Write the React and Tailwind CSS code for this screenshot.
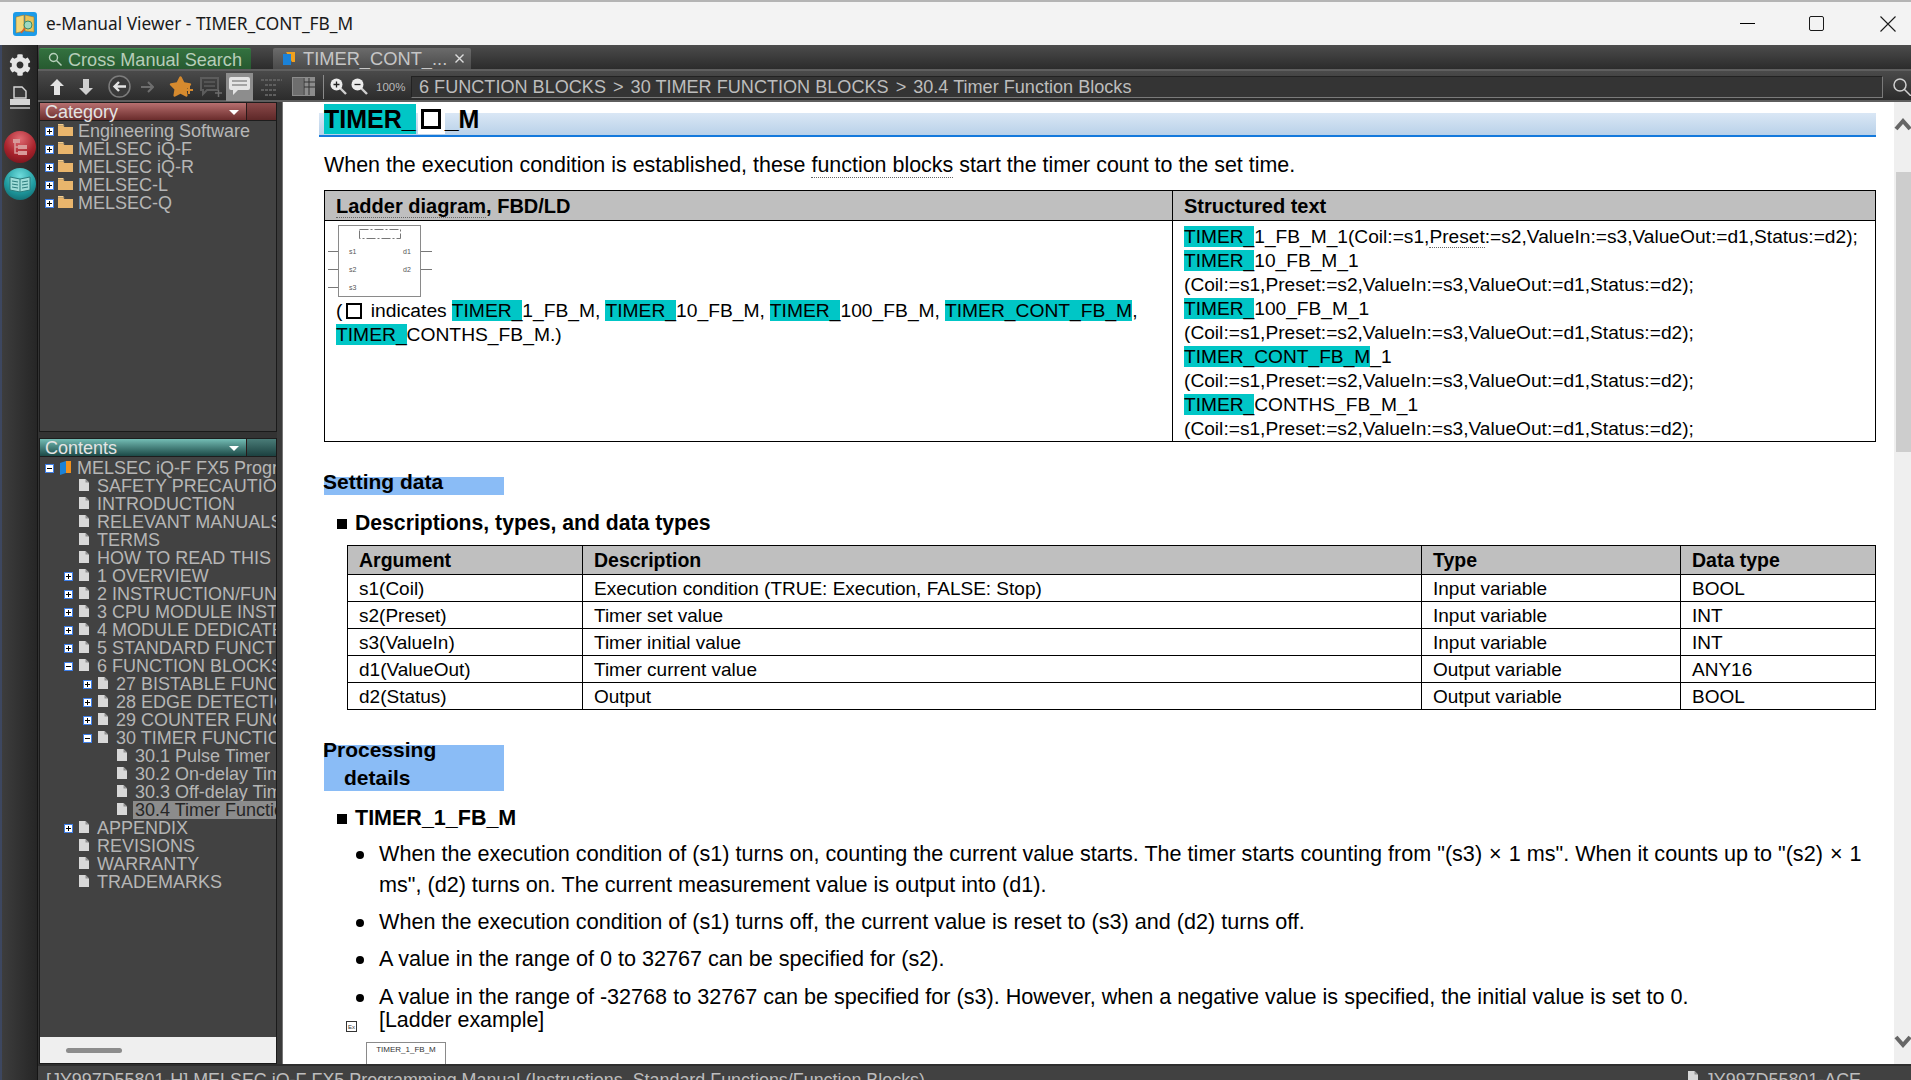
import React from "react";
import { FaCog, FaStar } from "react-icons/fa";

const Hi = ({ children }) => <span className="bg-[#00c6c6]">{children}</span>;
const Dot = ({ children }) => <span className="border-b border-dotted border-[#666]">{children}</span>;
const Times = () => <span className="mx-px">×</span>;
const Sep = () => <span className="mx-[7px]">{">"}</span>;

const Toggle = ({ open }) => (
  <span className="relative block h-[9px] w-[9px] shrink-0 border border-[#3f7fe8] bg-white">
    <span className="absolute left-[1px] top-[3px] h-px w-[5px] bg-black" />
    {!open && <span className="absolute left-[3px] top-[1px] h-[5px] w-px bg-black" />}
  </span>
);
const Page = () => (
  <svg width="10" height="12" viewBox="0 0 10 12" className="block shrink-0"><path d="M0 0h6.5L10 3.5V12H0z" fill="#d8d8d8" /><path d="M6.5 0v3.5H10" fill="#8f8f8f" /></svg>
);
const Folder = () => (
  <svg width="15" height="12" viewBox="0 0 15 12" className="block shrink-0"><path d="M0 1.5h5l1.5 1.5H15v9H0z" fill="#e9b56c" /><path d="M0 0h5l1.5 1.5H0z" fill="#f4cd8e" /></svg>
);
const Manual = () => (
  <svg width="14" height="14" viewBox="0 0 14 14" className="block shrink-0"><path d="M2 2 8 0v12l-6 2z" fill="#1b82d8" /><path d="M8 0h5v12H8z" fill="#f0911e" /></svg>
);

const Row = ({ level, toggle, icon, selected, children }) => {
  const pad = { 0: "pl-[5px]", 1: "pl-[24px]", 2: "pl-[43px]", 3: "pl-[62px]" }[level];
  return (
    <div className={`flex h-[18px] items-center whitespace-nowrap ${pad}`}>
      <span className="block w-[9px] shrink-0">{toggle && <Toggle open={toggle === "open"} />}</span>
      {icon === "folder" && <span className="ml-[4px] mb-[2px]"><Folder /></span>}
      {icon === "manual" && <span className="ml-[4px]"><Manual /></span>}
      {icon === "page" && <span className="ml-[6px] mb-[3px]"><Page /></span>}
      {icon === "page" ? (
        selected
          ? <span className="ml-[6px] h-[18px] flex-1 overflow-hidden bg-[#8c8c8c] pl-[2px] text-[#262626]">{children}</span>
          : <span className="ml-[8px]">{children}</span>
      ) : (
        <span className="ml-[5px]">{children}</span>
      )}
    </div>
  );
};

const cat = ["Engineering Software", "MELSEC iQ-F", "MELSEC iQ-R", "MELSEC-L", "MELSEC-Q"];
const tree = [
  [1, null, "SAFETY PRECAUTIONS"], [1, null, "INTRODUCTION"], [1, null, "RELEVANT MANUALS"], [1, null, "TERMS"],
  [1, null, "HOW TO READ THIS MANUAL"], [1, "closed", "1 OVERVIEW"], [1, "closed", "2 INSTRUCTION/FUNCTION BLOCK LIST"],
  [1, "closed", "3 CPU MODULE INSTRUCTIONS"], [1, "closed", "4 MODULE DEDICATED INSTRUCTIONS"], [1, "closed", "5 STANDARD FUNCTIONS"],
  [1, "open", "6 FUNCTION BLOCKS"], [2, "closed", "27 BISTABLE FUNCTION BLOCKS"], [2, "closed", "28 EDGE DETECTION FUNCTION BLOCKS"],
  [2, "closed", "29 COUNTER FUNCTION BLOCKS"], [2, "open", "30 TIMER FUNCTION BLOCKS"], [3, null, "30.1 Pulse Timer"],
  [3, null, "30.2 On-delay Timer"], [3, null, "30.3 Off-delay Timer"], [3, null, "30.4 Timer Function Blocks", true],
  [1, "closed", "APPENDIX"], [1, null, "REVISIONS"], [1, null, "WARRANTY"], [1, null, "TRADEMARKS"],
];

const PanelHeader = ({ label, cls, right }) => (
  <div className={`flex h-[19px] shrink-0 items-stretch border-t border-b border-[#1d1d1d] ${cls}`}>
    <div className="relative flex flex-1 items-center pl-[5px] text-[18px] leading-[18px] text-[#e4e4e4]">
      {label}
      <span className="absolute right-[7px] top-[7px] h-0 w-0 border-x-[5px] border-t-[5px] border-x-transparent border-t-white" />
    </div>
    <div className={`w-[30px] border-l border-[#2a1a1a] ${right}`} />
  </div>
);

const Args = [
  ["s1(Coil)", "Execution condition (TRUE: Execution, FALSE: Stop)", "Input variable", "BOOL"],
  ["s2(Preset)", "Timer set value", "Input variable", "INT"],
  ["s3(ValueIn)", "Timer initial value", "Input variable", "INT"],
  ["d1(ValueOut)", "Timer current value", "Output variable", "ANY16"],
  ["d2(Status)", "Output", "Output variable", "BOOL"],
];

const Bullet = ({ children, cls }) => (
  <li className={`relative pl-[55px] ${cls}`}>
    <span className="absolute left-[32px] top-[13px] h-[8px] w-[8px] rounded-full bg-black" />
    {children}
  </li>
);
const Params = "(Coil:=s1,Preset:=s2,ValueIn:=s3,ValueOut:=d1,Status:=d2);";

const FbBlock = () => (
  <svg width="106" height="74" viewBox="0 0 106 74" className="block">
    <rect x="10.5" y="0.5" width="82" height="71" fill="#fff" stroke="#8a8a8a" />
    <rect x="31.5" y="4.5" width="41" height="9" fill="none" stroke="#777" strokeDasharray="9 2 2 2" />
    {[26, 44, 62].map((y) => <path key={y} d={`M0 ${y}.5h10`} stroke="#777" />)}
    {[26, 44].map((y) => <path key={y} d={`M93 ${y}.5h11`} stroke="#777" />)}
    <g fontSize="7" fill="#555" fontFamily="Liberation Sans">
      <text x="21" y="29">s1</text><text x="21" y="47">s2</text><text x="21" y="65">s3</text>
      <text x="75" y="29">d1</text><text x="75" y="47">d2</text>
    </g>
  </svg>
);

const Tb = ({ children, cls = "" }) => <div className={`flex shrink-0 items-center justify-center ${cls}`}>{children}</div>;

export default function App() {
  return (
    <div className="flex h-[1080px] w-[1911px] flex-col overflow-hidden bg-[#333] [font-family:'Liberation_Sans',Arial,sans-serif]">
      {/* Title bar */}
      <div className="flex h-[45px] shrink-0 items-center border-t-2 border-[#b4b4b4] bg-[#f3f3f3] pl-[13px]">
        <svg width="24" height="24" viewBox="0 0 24 24" className="block">
          <rect width="24" height="24" rx="3" fill="#1c9be8" />
          <path d="M3 5l8-2v16l-8 2z" fill="#f3d77a" stroke="#a27a2a" strokeWidth=".6" />
          <path d="M12 3l9 2v15l-9-1z" fill="#e9c35a" stroke="#a27a2a" strokeWidth=".6" />
          <circle cx="15" cy="13" r="4" fill="#9fd8c0" stroke="#3c8a66" />
          <path d="M12 16l-4 5" stroke="#d9602a" strokeWidth="1.6" />
        </svg>
        <div className="ml-[9px] flex-1 text-[17.300px] leading-[20px] text-[#1a1a1a] [font-family:'Noto_Sans',sans-serif]">e-Manual Viewer - TIMER_CONT_FB_M</div>
        <div className="mr-[54px] h-px w-[15px] bg-black" />
        <div className="mr-[56px] h-[15px] w-[15px] rounded-[2px] border-[1.5px] border-[#1a1a1a]" />
        <svg width="16" height="16" viewBox="0 0 16 16" className="mr-[15px] block"><path d="M.5.5l15 15M15.5.5l-15 15" stroke="#1a1a1a" strokeWidth="1.1" /></svg>
      </div>

      <div className="flex min-h-0 flex-1">
        <div className="w-[2px] shrink-0 bg-[#3d4760]" />
        {/* Left rail */}
        <div className="flex w-[36px] shrink-0 flex-col items-center border-r border-[#151515] bg-gradient-to-r from-[#3d3d3d] to-[#262626] pt-[9px]">
          <FaCog className="block text-[#e6e6e6]" size={22} />
          <svg width="22" height="24" viewBox="0 0 22 24" className="mt-[10px] block">
            <path d="M5 1h8l4 4v7H5z" fill="#3a3a3a" stroke="#d8d8d8" strokeWidth="1.4" />
            <path d="M1 13h20v6H1z" fill="#d5d5d5" /><path d="M1 21h20v2H1z" fill="#9a9a9a" />
          </svg>
          <div className="mt-[21px] flex h-[32px] w-[32px] items-center justify-center rounded-full bg-[radial-gradient(circle_at_50%_25%,#e06a72,#a8232c_55%,#6a1018)]">
            <svg width="20" height="20" viewBox="0 0 20 20"><path d="M3 2h7v4H3zM8 8h9v4H8zM8 14h9v4H8z" fill="#d89a9a" /><path d="M5 6v10h3M5 10h3" fill="none" stroke="#d89a9a" strokeWidth="1.5" /></svg>
          </div>
          <div className="mt-[5px] flex h-[32px] w-[32px] items-center justify-center rounded-full bg-[radial-gradient(circle_at_50%_25%,#6fdcdc,#1f9a9f_55%,#0e5a60)]">
            <svg width="22" height="18" viewBox="0 0 22 18"><path d="M1 2l10 2 10-2v13l-10 2-10-2z" fill="#9fdcd8" stroke="#2a7c7c" /><path d="M11 4v13M3 6l6 1M3 9l6 1M3 12l6 1M13 7l6-1M13 10l6-1M13 13l6-1" stroke="#2a7c7c" /></svg>
          </div>
        </div>

        <div className="flex min-w-0 flex-1 flex-col">
          {/* Tab row */}
          <div className="flex h-[24px] shrink-0 items-end bg-gradient-to-b from-[#4c4c4c] to-[#2c2c2c] pl-px">
            <div className="flex h-[21px] w-[212px] items-center rounded-t-[2px] border-t border-[#3f8a4c] bg-gradient-to-b from-[#33713f] to-[#275a30] pl-[9px]">
              <svg width="14" height="14" viewBox="0 0 14 14" fill="none" stroke="#b7d0bb" strokeWidth="1.4"><circle cx="5.5" cy="5.5" r="4" /><path d="M8.5 8.5l5 5" /></svg>
              <span className="ml-[6px] mt-[1px] text-[18.100px] leading-[20px] text-[#b7cdb9]">Cross Manual Search</span>
            </div>
            <div className="ml-[22px] flex h-[21px] w-[198px] items-center rounded-t-[2px] bg-gradient-to-b from-[#6b6b6b] to-[#4b4b4b] pl-[10px]">
              <svg width="12" height="13" viewBox="0 0 12 13"><path d="M3 0h9v10H9z" fill="#f0a01e" /><path d="M0 2h8v11H0z" fill="#1b82d8" /></svg>
              <span className="ml-[8px] text-[18.300px] leading-[20px] text-[#c6c6c6]">TIMER_CONT_...</span>
              <svg width="9" height="9" viewBox="0 0 9 9" className="ml-[8px]"><path d="M.5.5l8 8M8.5.5l-8 8" stroke="#ddd" strokeWidth="1.4" /></svg>
            </div>
          </div>

          {/* Toolbar */}
          <div className="flex h-[33px] shrink-0 items-center border-t-2 border-b-2 border-t-[#5f5f5f] border-b-[#5e5e5e] bg-gradient-to-b from-[#4a4a4a] to-[#2c2c2c] pt-[2px]">
            <Tb cls="ml-[12px] w-[14px]"><svg width="14" height="16" viewBox="0 0 14 16"><path d="M7 0l7 7H10v9H4V7H0z" fill="#e2e2e2" /></svg></Tb>
            <Tb cls="ml-[15px] w-[14px]"><svg width="14" height="16" viewBox="0 0 14 16"><path d="M7 16l7-7H10V0H4v9H0z" fill="#cfcfcf" /></svg></Tb>
            <Tb cls="ml-[15px] w-[23px]">
              <svg width="23" height="23" viewBox="0 0 23 23"><circle cx="11.5" cy="11.5" r="10.5" fill="#3a3a3a" stroke="#7c7c7c" strokeWidth="1.5" /><path d="M18 11.5H7M11 7l-4.5 4.5L11 16" fill="none" stroke="#e4e4e4" strokeWidth="2.4" /></svg>
            </Tb>
            <Tb cls="ml-[9px] w-[14px]"><svg width="14" height="12" viewBox="0 0 14 12"><path d="M1 6h11M8 1l5 5-5 5" fill="none" stroke="#6e6e6e" strokeWidth="2" /></svg></Tb>
            <Tb cls="relative ml-[13px] w-[26px]">
              <FaStar className="block text-[#d68a2e]" size={23} />
              <span className="absolute right-0 top-[14px] h-[2px] w-[8px] bg-[#d68a2e]" />
              <span className="absolute right-[3px] top-[11px] h-[8px] w-[2px] bg-[#d68a2e]" />
            </Tb>
            <Tb cls="ml-[6px] w-[24px]">
              <svg width="24" height="22" viewBox="0 0 24 22" fill="none"><path d="M2 2h17v12H8l-4 4v-4H2z" stroke="#5c5c5c" strokeWidth="2" /><path d="M5 6h11M5 10h11" stroke="#5c5c5c" strokeWidth="1.5" /><path d="M16 17h7M19.500 14v7" stroke="#6e6e6e" strokeWidth="1.5" /></svg>
            </Tb>
            <Tb cls="ml-[3px] h-[28px] w-[27px] bg-[#8d8d8d]">
              <svg width="21" height="19" viewBox="0 0 21 19"><path d="M2 0h17a2 2 0 0 1 2 2v9a2 2 0 0 1-2 2H9l-5 5v-5H2a2 2 0 0 1-2-2V2a2 2 0 0 1 2-2z" fill="#e4e4e4" /><path d="M3 4h15M3 8h15" stroke="#8d8d8d" strokeWidth="1.5" /></svg>
            </Tb>
            <Tb cls="ml-[8px] w-[22px]">
              <svg width="22" height="18" viewBox="0 0 22 18" stroke="#5e5e5e" strokeWidth="2" strokeDasharray="3 1"><path d="M0 2h21M4 7h12M0 12h15M4 17h12" /></svg>
            </Tb>
            <Tb cls="ml-[9px] w-[23px]">
              <svg width="23" height="19" viewBox="0 0 23 19"><rect width="23" height="19" fill="#8c8c8c" /><rect x="1" y="1" width="10" height="17" fill="#6e6e6e" /><path d="M12 1v17M17 1v17M12 5h11M12 10h11" stroke="#333" /></svg>
            </Tb>
            <div className="ml-[8px] h-[24px] w-px bg-[#8a8a8a]" />
            <Tb cls="ml-[6px] w-[17px]">
              <svg width="17" height="17" viewBox="0 0 17 17"><path d="M10 10l6 6" stroke="#cfcfcf" strokeWidth="2.400" /><circle cx="6.500" cy="6.500" r="6" fill="#ececec" /><path d="M3.500 6.500h6M6.500 3.500v6" stroke="#222" strokeWidth="1.300" /></svg>
            </Tb>
            <Tb cls="ml-[4px] w-[17px]">
              <svg width="17" height="17" viewBox="0 0 17 17"><path d="M10 10l6 6" stroke="#cfcfcf" strokeWidth="2.400" /><circle cx="6.500" cy="6.500" r="6" fill="#ececec" /><path d="M3.500 6.500h6" stroke="#222" strokeWidth="1.300" /></svg>
            </Tb>
            <span className="ml-[8px] w-[30px] text-[11.500px] leading-[14px] text-[#b9b9b9]">100%</span>
            <div className="ml-[5px] flex h-[22px] w-[1472px] items-center whitespace-nowrap border border-[#222] border-r-[#7a7a7a] border-b-[#7a7a7a] bg-[#343434] pl-[7px] text-[18.100px] leading-[20px] text-[#bdbdbd]">
              <span>6 FUNCTION BLOCKS</span><Sep /><span>30 TIMER FUNCTION BLOCKS</span><Sep /><span>30.4 Timer Function Blocks</span>
            </div>
            <svg width="18" height="18" viewBox="0 0 18 18" className="ml-[10px] shrink-0" fill="none" stroke="#d0d0d0" strokeWidth="1.500"><circle cx="7" cy="7" r="6" /><path d="M11 11l7 7" /></svg>
          </div>

          <div className="flex min-h-0 flex-1">
            {/* Sidebar */}
            <div className="flex w-[239px] shrink-0 flex-col pl-px text-[18px] leading-[18px] text-[#b6b6b6]">
              <div className="flex h-[330px] shrink-0 flex-col border border-t-0 border-[#1a1a1a] bg-[#424242]">
                <PanelHeader label="Category" cls="bg-gradient-to-b from-[#b87070] to-[#6a2c2c]" right="bg-gradient-to-b from-[#8a4a4a] to-[#5e2828]" />
                <div className="pt-[1px]">
                  {cat.map((c) => <Row key={c} level={0} toggle="closed" icon="folder">{c}</Row>)}
                </div>
              </div>
              <div className="mt-[6px] flex min-h-0 flex-1 flex-col border border-t-0 border-[#1a1a1a] bg-[#424242]">
                <PanelHeader label="Contents" cls="bg-gradient-to-b from-[#74bdb5] to-[#1c4a47]" right="bg-gradient-to-b from-[#4a7c78] to-[#1c4140]" />
                <div className="min-h-0 flex-1 overflow-hidden pt-[2px]">
                  <Row level={0} toggle="open" icon="manual">MELSEC iQ-F FX5 Programming Manual</Row>
                  {tree.map(([l, t, label, sel]) => <Row key={label} level={l} toggle={t} icon="page" selected={sel}>{label}</Row>)}
                </div>
                <div className="flex h-[26px] shrink-0 items-center bg-[#efefef] pl-[26px]"><div className="h-[5px] w-[56px] rounded-full bg-[#8c8c8c]" /></div>
              </div>
            </div>

            <div className="w-[6px] shrink-0 border-r border-[#777] bg-[#3a3a3a]" />

            {/* Document */}
            <div className="flex min-w-0 flex-1 bg-white">
              <div className="min-w-0 flex-1 overflow-hidden pl-[41px] pr-[18px] text-[21.450px] leading-[24px] text-black">
                <div className="-ml-[5px] mt-[11px] flow-root h-[24px] border-b-2 border-[#1479dc] bg-gradient-to-b from-[#dae7f5] to-[#b9d1e9] pl-[5px]">
                  <div className="-mt-[9px] flex h-[30px] items-center text-[25px] leading-[30px] font-bold">
                    <span className="bg-[#00c6c6]">TIMER_</span>
                    <span className="ml-[2px] flex h-[30px] w-[27px] items-center justify-center bg-white"><span className="block h-[20px] w-[20px] border-[3px] border-black" /></span>
                    <span>_M</span>
                  </div>
                </div>

                <p className="mt-[16px]">When the execution condition is established, these <Dot>function blocks</Dot> start the timer count to the set time.</p>

                <table className="mt-[13px] w-[1552px] table-fixed border-collapse border border-black text-[19.170px] leading-[24px]">
                  <colgroup><col className="w-[848px]" /><col /></colgroup>
                  <thead>
                    <tr className="h-[30px] bg-[#bfbfbf] text-left text-[20px] font-bold">
                      <th className="border border-black pl-[11px] font-bold"><Dot>Ladder diagram</Dot>, FBD/LD</th>
                      <th className="border border-black pl-[11px] font-bold">Structured text</th>
                    </tr>
                  </thead>
                  <tbody>
                    <tr className="h-[221px] align-top">
                      <td className="border border-black pl-[3px] pt-[4px]">
                        <FbBlock />
                        <div className="pl-[8px] text-[19.250px]">
                          (<span className="ml-[4px] mr-[3px] inline-block h-[16px] w-[16px] translate-y-[2px] border-2 border-black" /> indicates <Hi>TIMER_</Hi>1_FB_M, <Hi>TIMER_</Hi>10_FB_M, <Hi>TIMER_</Hi>100_FB_M, <Hi>TIMER_CONT_FB_M</Hi>,<br />
                          <Hi>TIMER_</Hi>CONTHS_FB_M.)
                        </div>
                      </td>
                      <td className="border border-black pl-[11px] pt-[4px]">
                        <div><Hi>TIMER_</Hi>1_FB_M_1(Coil:=s1,<Dot>Preset</Dot>:=s2,ValueIn:=s3,ValueOut:=d1,Status:=d2);</div>
                        <div><Hi>TIMER_</Hi>10_FB_M_1</div>
                        <div>{Params}</div>
                        <div><Hi>TIMER_</Hi>100_FB_M_1</div>
                        <div>{Params}</div>
                        <div><Hi>TIMER_CONT_FB_M</Hi>_1</div>
                        <div>{Params}</div>
                        <div><Hi>TIMER_</Hi>CONTHS_FB_M_1</div>
                        <div>{Params}</div>
                      </td>
                    </tr>
                  </tbody>
                </table>

                <div className="mt-[35px] flow-root h-[18px] w-[180px] bg-[#8abcf6] text-[21px] leading-[28px] font-bold">
                  <div className="-ml-px -mt-[9px]">Setting data</div>
                </div>

                <div className="ml-[13px] mt-[15px] flex h-[26px] items-center text-[21.200px] font-bold">
                  <span className="mt-[2px] h-[10px] w-[10px] bg-black" />
                  <span className="ml-[8px]">Descriptions, types, and data types</span>
                </div>

                <table className="ml-[23px] mt-[9px] w-[1529px] table-fixed border-collapse border border-black text-[19px] leading-[24px]">
                  <colgroup><col className="w-[235px]" /><col className="w-[839px]" /><col className="w-[259px]" /><col /></colgroup>
                  <thead>
                    <tr className="h-[29px] bg-[#bfbfbf] text-left text-[19.500px]">
                      {["Argument", "Description", "Type", "Data type"].map((h) => <th key={h} className="border border-black pl-[11px] font-bold">{h}</th>)}
                    </tr>
                  </thead>
                  <tbody>
                    {Args.map((r) => (
                      <tr key={r[0]} className="h-[27px]">
                        {r.map((c, i) => <td key={i} className="border border-black pl-[11px] pt-[1px]">{c}</td>)}
                      </tr>
                    ))}
                  </tbody>
                </table>

                <div className="mt-[35px] flow-root h-[46px] w-[180px] bg-[#8abcf6] text-[21px] leading-[28px] font-bold">
                  <div className="-ml-px -mt-[9px]">Processing</div>
                  <div className="ml-[20px]">details</div>
                </div>

                <div className="ml-[13px] mt-[14px] flex h-[26px] items-center text-[21.500px] font-bold">
                  <span className="mt-[2px] h-[10px] w-[10px] bg-black" />
                  <span className="ml-[8px]">TIMER_1_FB_M</span>
                </div>

                <ul className="mt-[7px] text-[21.600px] leading-[31px]">
                  <Bullet>When the execution condition of (s1) turns on, counting the current value starts. The timer starts counting from "(s3) <Times /> 1 ms". When it counts up to "(s2) <Times /> 1 ms", (d2) turns on. The current measurement value is output into (d1).</Bullet>
                  <Bullet cls="mt-[6px]">When the execution condition of (s1) turns off, the current value is reset to (s3) and (d2) turns off.</Bullet>
                  <Bullet cls="mt-[6px]">A value in the range of 0 to 32767 can be specified for (s2).</Bullet>
                  <Bullet cls="mt-[7px]">A value in the range of -32768 to 32767 can be specified for (s3). However, when a negative value is specified, the initial value is set to 0.</Bullet>
                </ul>
                <div className="relative -mt-[4px] h-[24px] pl-[55px] text-[21.400px]">
                  [Ladder example]
                  <span className="absolute left-[22px] top-[13px] flex h-[11px] w-[11px] items-center justify-center border border-[#333] text-[6px] leading-[6px] text-[#333]">Ex</span>
                </div>
                <div className="ml-[42px] mt-[10px] h-[40px] w-[80px] border border-[#8a8a8a] pt-[2px] text-center text-[8px] leading-[10px] text-[#333]">TIMER_1_FB_M</div>
              </div>

              {/* Scrollbar */}
              <div className="flex w-[17px] shrink-0 flex-col items-stretch bg-[#efefef]">
                <svg width="17" height="16" viewBox="0 0 17 16" className="mt-[14px] block shrink-0" fill="none" stroke="#666" strokeWidth="4"><path d="M2 13L9 5l7 8" /></svg>
                <div className="ml-[2px] mt-[40px] h-[280px] bg-[#cdcdcd]" />
                <svg width="17" height="16" viewBox="0 0 17 16" className="mt-auto mb-[14px] block shrink-0" fill="none" stroke="#666" strokeWidth="4"><path d="M2 3l7 8 7-8" /></svg>
              </div>
            </div>
          </div>

          {/* Status bar */}
          <div className="flex h-[16px] shrink-0 items-start overflow-hidden border-t-2 border-[#2e2e2e] bg-[#414141] pl-[8px] text-[17.900px] leading-[20px] whitespace-nowrap text-[#bdbdbd]">
            <span className="-mt-[1px] flex-1 pt-[5px]">[JY997D55801-H] MELSEC iQ-F FX5 Programming Manual (Instructions, Standard Functions/Function Blocks)</span>
            <span className="mt-[5px] mr-[7px]"><Page /></span>
            <span className="-mt-[1px] mr-[50px] pt-[5px]">JY997D55801-ACE</span>
          </div>
        </div>
      </div>
    </div>
  );
}
